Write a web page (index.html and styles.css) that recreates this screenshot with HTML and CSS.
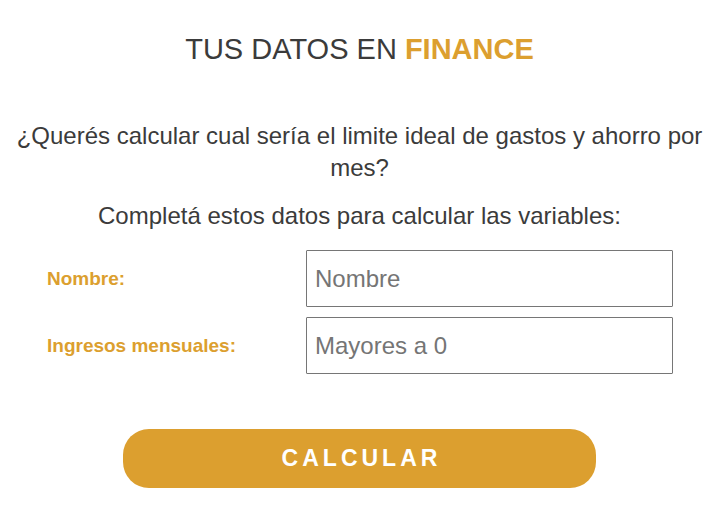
FILE: index.html
```html
<!DOCTYPE html>
<html lang="es">
<head>
<meta charset="utf-8">
<link rel="stylesheet" href="styles.css">
</head>
<body>
<main class="page">
  <h1 class="title">TUS DATOS EN <span class="brand">FINANCE</span></h1>
  <p class="question">¿Querés calcular cual sería el limite ideal de gastos y ahorro por mes?</p>
  <p class="hint">Completá estos datos para calcular las variables:</p>
  <form class="form">
    <div class="row">
      <label class="label" for="nombre">Nombre:</label>
      <input class="input" id="nombre" type="text" placeholder="Nombre">
    </div>
    <div class="row">
      <label class="label" for="ingresos">Ingresos mensuales:</label>
      <input class="input" id="ingresos" type="text" placeholder="Mayores a 0">
    </div>
    <div class="actions">
      <button class="btn" type="button">CALCULAR</button>
    </div>
  </form>
</main>
</body>
</html>
```
FILE: styles.css
```css
* { box-sizing: border-box; }
html, body { margin: 0; background: #fff; }
body {
  font-family: "Liberation Sans", Arial, sans-serif;
  color: #3b3b3b;
}
.page {
  width: 719px;
  padding-top: 33px;
}
.title {
  margin: 0;
  text-align: center;
  font-size: 29px;
  font-weight: normal;
  line-height: 32px;
  color: #3b3b3b;
}
.brand {
  color: #dc9f2f;
  font-weight: bold;
}
.question {
  margin: 55px 0 0;
  text-align: center;
  font-size: 24px;
  line-height: 32px;
  padding: 0 10px;
}
.hint {
  margin: 16px 0 0;
  text-align: center;
  font-size: 24px;
  line-height: 32px;
}
.form {
  margin-top: 18px;
}
.row {
  display: flex;
  align-items: center;
  padding-left: 47px;
  margin-bottom: 10px;
}
.label {
  width: 259px;
  color: #dc9f2f;
  font-weight: bold;
  font-size: 19px;
}
.input {
  width: 367px;
  height: 57px;
  border: 1px solid #767676;
  border-radius: 1px;
  padding: 0 8px;
  font-family: "Liberation Sans", Arial, sans-serif;
  font-size: 24px;
  color: #3b3b3b;
  background: #fff;
}
.input::placeholder { color: #757575; }
.actions {
  display: flex;
  justify-content: center;
  margin-top: 55px;
}
.btn {
  width: 473px;
  height: 59px;
  border: none;
  border-radius: 26px;
  background: #dc9f2f;
  color: #fff;
  font-family: "Liberation Sans", Arial, sans-serif;
  font-weight: bold;
  font-size: 23px;
  letter-spacing: 4px;
  padding: 0 0 0 4px;
}
```
